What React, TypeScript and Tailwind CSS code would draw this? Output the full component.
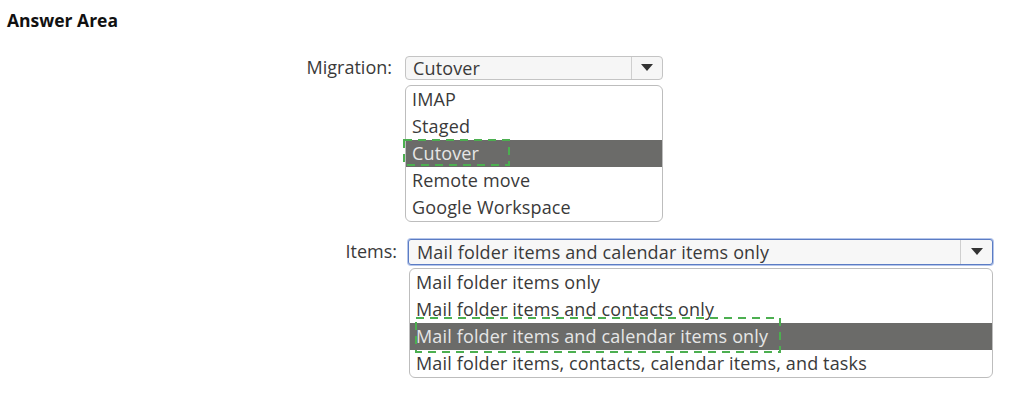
import React from "react";

const font = { fontFamily: '"Open Sans", "Noto Sans", sans-serif' };

function Arrow() {
  return (
    <svg width="12" height="7" viewBox="0 0 12 7">
      <path d="M0 0 L12 0 L6 7 Z" fill="#333" />
    </svg>
  );
}

function DashBox({ w, h, className }: any) {
  return (
    <svg className={`absolute ${className}`} width={w} height={h}>
      <rect x="1" y="1" width={w - 2} height={h - 2} fill="none" stroke="#4caf50" strokeWidth="2" strokeDasharray="8 6" />
    </svg>
  );
}

function List({ items, selected, width, box }: any) {
  return (
    <div className={`relative border border-[#bdbdbd] rounded-[6px] bg-white ${width}`}>
      {items.map((item: string, i: number) => (
        <div
          key={item}
          className={`h-[27px] leading-[26px] pl-[6px] text-[18px] tracking-[0.15px] ${
            i === selected ? "bg-[#6b6b69] text-[#e6e6e6]" : "text-[#3a3a3a]"
          }`}
        >
          {item}
        </div>
      ))}
      {box}
    </div>
  );
}

export default function App() {
  return (
    <div className="w-[1019px] h-[397px] bg-white" style={font}>
      <div className="pt-[7px] pl-[7px] text-[17.5px] font-bold text-[#111]">Answer Area</div>

      <div className="mt-[21px] flex items-center">
        <div className="w-[392px] text-right text-[18px] text-[#3a3a3a]">Migration:</div>
        <div className="ml-[13px] w-[258px] h-[24px] flex border border-[#c4c4c4] rounded-[4px] bg-[#f6f6f6]">
          <div className="flex-1 pl-[7px] text-[18px] leading-[22px] text-[#3a3a3a] tracking-[0.15px]">Cutover</div>
          <div className="w-[31px] border-l border-[#cfcfcf] flex items-center justify-center">
            <Arrow />
          </div>
        </div>
      </div>
      <div className="ml-[405px] mt-[4px]">
        <List
          width="w-[258px]"
          items={["IMAP", "Staged", "Cutover", "Remote move", "Google Workspace"]}
          selected={2}
          box={<DashBox w={107} h={27} className="left-[-3px] top-[53px]" />}
        />
      </div>

      <div className="mt-[16px] flex items-center">
        <div className="w-[397px] text-right text-[18px] text-[#3a3a3a]">Items:</div>
        <div className="ml-[11px] w-[585px] h-[26px] flex border border-[#5b7cc4] ring-1 ring-[#b4c5ea] rounded-[3px] bg-[#f7f7f7]">
          <div className="flex-1 pl-[8px] text-[18px] leading-[24px] text-[#3a3a3a] tracking-[0.15px]">
            Mail folder items and calendar items only
          </div>
          <div className="w-[32px] border-l border-[#cfcfcf] flex items-center justify-center">
            <Arrow />
          </div>
        </div>
      </div>
      <div className="ml-[409px] mt-[3px]">
        <List
          width="w-[584px]"
          items={[
            "Mail folder items only",
            "Mail folder items and contacts only",
            "Mail folder items and calendar items only",
            "Mail folder items, contacts, calendar items, and tasks",
          ]}
          selected={2}
          box={<DashBox w={366} h={36} className="left-[5px] top-[48px]" />}
        />
      </div>
    </div>
  );
}
